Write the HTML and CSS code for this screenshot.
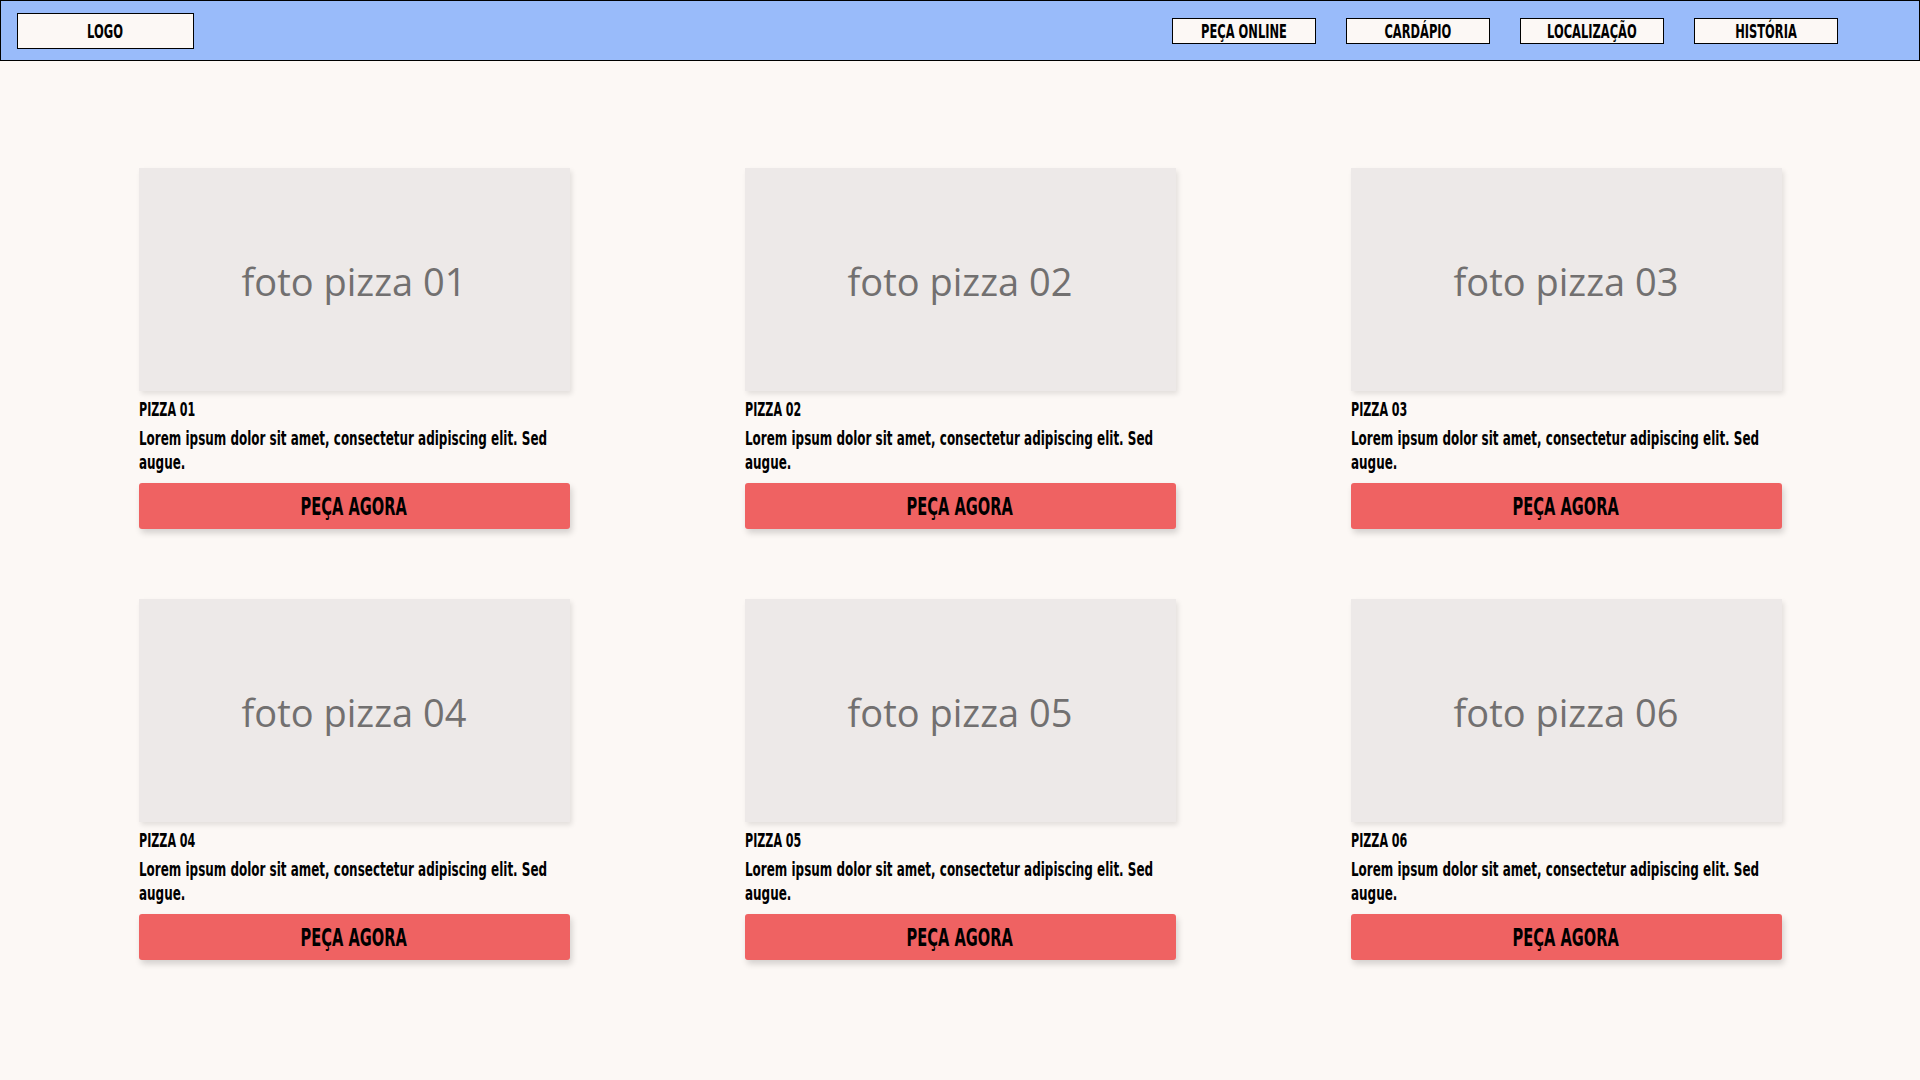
FILE: index.html
```html
<!DOCTYPE html>
<html lang="pt-BR">
<head>
<meta charset="utf-8">
<title>Pizzaria</title>
<link rel="stylesheet" href="styles.css">
</head>
<body>
<header class="topbar">
  <div class="logo"><span class="squeeze">LOGO</span></div>
  <nav class="nav">
    <a class="nav-item"><span class="squeeze">PEÇA ONLINE</span></a>
    <a class="nav-item"><span class="squeeze">CARDÁPIO</span></a>
    <a class="nav-item"><span class="squeeze">LOCALIZAÇÃO</span></a>
    <a class="nav-item"><span class="squeeze">HISTÓRIA</span></a>
  </nav>
</header>
<main class="menu">
  <div class="grid">
    <article class="card">
      <div class="photo">foto pizza 01</div>
      <h2 class="title"><span class="squeeze">PIZZA 01</span></h2>
      <p class="desc">Lorem ipsum dolor sit amet, consectetur adipiscing elit. Sed augue.</p>
      <button class="order"><span class="squeeze">PEÇA AGORA</span></button>
    </article>
    <article class="card">
      <div class="photo">foto pizza 02</div>
      <h2 class="title"><span class="squeeze">PIZZA 02</span></h2>
      <p class="desc">Lorem ipsum dolor sit amet, consectetur adipiscing elit. Sed augue.</p>
      <button class="order"><span class="squeeze">PEÇA AGORA</span></button>
    </article>
    <article class="card">
      <div class="photo">foto pizza 03</div>
      <h2 class="title"><span class="squeeze">PIZZA 03</span></h2>
      <p class="desc">Lorem ipsum dolor sit amet, consectetur adipiscing elit. Sed augue.</p>
      <button class="order"><span class="squeeze">PEÇA AGORA</span></button>
    </article>
    <article class="card">
      <div class="photo">foto pizza 04</div>
      <h2 class="title"><span class="squeeze">PIZZA 04</span></h2>
      <p class="desc">Lorem ipsum dolor sit amet, consectetur adipiscing elit. Sed augue.</p>
      <button class="order"><span class="squeeze">PEÇA AGORA</span></button>
    </article>
    <article class="card">
      <div class="photo">foto pizza 05</div>
      <h2 class="title"><span class="squeeze">PIZZA 05</span></h2>
      <p class="desc">Lorem ipsum dolor sit amet, consectetur adipiscing elit. Sed augue.</p>
      <button class="order"><span class="squeeze">PEÇA AGORA</span></button>
    </article>
    <article class="card">
      <div class="photo">foto pizza 06</div>
      <h2 class="title"><span class="squeeze">PIZZA 06</span></h2>
      <p class="desc">Lorem ipsum dolor sit amet, consectetur adipiscing elit. Sed augue.</p>
      <button class="order"><span class="squeeze">PEÇA AGORA</span></button>
    </article>
  </div>
</main>
</body>
</html>
```
FILE: styles.css
```css
* { box-sizing: border-box; }

html, body {
  margin: 0;
  padding: 0;
  background: #fcf8f5;
}

body {
  width: 1920px;
  height: 1080px;
  overflow: hidden;
  font-family: "Liberation Sans Narrow", "DejaVu Sans Condensed", "Liberation Sans", sans-serif;
  font-weight: 700;
  color: #000;
}

/* condensed display face simulation */
.squeeze {
  display: inline-block;
  white-space: nowrap;
  transform: scaleX(0.66);
}

.topbar {
  height: 61px;
  background: #99bbfa;
  border: 1px solid #000;
  display: flex;
  align-items: center;
  justify-content: space-between;
  padding: 0 81px 0 16px;
}

.logo {
  width: 177px;
  height: 36px;
  background: #fcf8f5;
  border: 1px solid #000;
  display: flex;
  align-items: center;
  justify-content: center;
  font-size: 20px;
}

.logo .squeeze { transform: scaleX(0.64); }

.nav {
  display: flex;
  gap: 30px;
}

.nav-item {
  width: 144px;
  height: 26px;
  background: #fcf8f5;
  border: 1px solid #000;
  display: flex;
  align-items: center;
  justify-content: center;
  font-size: 19px;
  color: #000;
  overflow: visible;
}

.nav-item .squeeze { transform: scaleX(0.67); }

.menu {
  padding-top: 107px;
}

.grid {
  width: 1643px;
  margin: 0 auto;
  display: grid;
  grid-template-columns: repeat(3, 431px);
  column-gap: 175px;
  row-gap: 70px;
}

.card {
  display: flex;
  flex-direction: column;
}

.photo {
  height: 223px;
  padding-top: 3px;
  background: #ede9e8;
  box-shadow: 2px 3px 5px rgba(0, 0, 0, 0.10);
  display: flex;
  align-items: center;
  justify-content: center;
  font-family: "Open Sans", "Noto Sans", sans-serif;
  font-weight: 400;
  font-size: 38px;
  color: #727070;
}

.title {
  margin: 8px 0 0;
  font-size: 19px;
  line-height: 20px;
  font-weight: 700;
}

.title .squeeze {
  transform: scaleX(0.65);
  transform-origin: left center;
}

.desc {
  margin: 7px 0 0;
  width: 616px;
  font-size: 19px;
  line-height: 24px;
  transform: scaleX(0.7);
  transform-origin: left top;
}

.order {
  margin-top: 9px;
  height: 46px;
  width: 100%;
  border: none;
  border-radius: 3px;
  background: #ef6262;
  box-shadow: 2px 4px 6px rgba(0, 0, 0, 0.16);
  font-family: "Liberation Sans Narrow", "DejaVu Sans Condensed", "Liberation Sans", sans-serif;
  font-weight: 700;
  font-size: 25px;
  color: #000;
  padding: 0;
}

.order .squeeze { transform: scaleX(0.65); }
```
